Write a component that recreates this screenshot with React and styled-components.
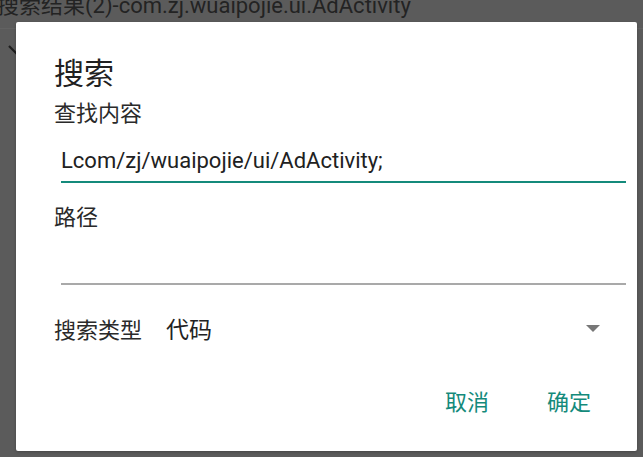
import React from 'react';
import styled, { createGlobalStyle } from 'styled-components';

const GlobalStyle = createGlobalStyle`
  html, body {
    margin: 0;
    padding: 0;
    background: #5b5b5b;
    font-family: Roboto, "Noto Sans CJK SC", sans-serif;
  }
`;

const Screen = styled.div`
  position: relative;
  width: 643px;
  height: 457px;
  overflow: hidden;
  background: #5b5b5b;
`;

const Toolbar = styled.div`
  height: 28px;
  border-bottom: 1px solid #626262;
  overflow: hidden;
`;

const ToolbarTitle = styled.div`
  margin: -8px 0 0 -3px;
  font-size: 22px;
  line-height: 28px;
  color: #232323;
  white-space: nowrap;
`;

const BackIcon = styled.svg`
  display: block;
  margin: 16px 0 0 8px;
`;

const Dialog = styled.div`
  position: absolute;
  left: 16px;
  top: 22px;
  width: 621px;
  height: 429px;
  box-sizing: border-box;
  background: #ffffff;
  border-radius: 2px;
  padding: 32px 11px 0 38px;
  display: flex;
  flex-direction: column;
  box-shadow: 0 1px 3px rgba(0, 0, 0, 0.25);
`;

const Title = styled.h2`
  margin: 0;
  font-size: 30px;
  font-weight: 400;
  line-height: 40px;
  color: #212121;
`;

const Label = styled.div`
  font-size: 22px;
  line-height: 28px;
  color: #2a2a2a;
  margin-top: ${({ $gap }) => $gap || 0}px;
`;

const Field = styled.div`
  margin: ${({ $top }) => $top || 0}px 0 0 7px;
  height: ${({ $height }) => $height}px;
  border-bottom: ${({ $focused }) => ($focused ? '2px solid #148a7b' : '2px solid #a9a9a9')};
  font-size: 22px;
  line-height: 30px;
  color: #212121;
  display: flex;
  align-items: flex-end;
  padding-bottom: 5px;
  box-sizing: border-box;
`;

const TypeRow = styled.div`
  margin-top: 26px;
  display: flex;
  align-items: center;
  height: 34px;
`;

const TypeLabel = styled.span`
  font-size: 22px;
  color: #2a2a2a;
`;

const TypeValue = styled.span`
  margin-left: 24px;
  font-size: 23px;
  color: #222222;
  flex: 1;
`;

const Caret = styled.span`
  width: 0;
  height: 0;
  border-left: 7px solid transparent;
  border-right: 7px solid transparent;
  border-top: 7px solid #777777;
  margin-right: 26px;
`;

const Actions = styled.div`
  margin-top: 44px;
  display: flex;
  justify-content: flex-end;
  gap: 58px;
  padding-right: 35px;
`;

const ActionButton = styled.button`
  border: none;
  background: none;
  padding: 0;
  font-family: inherit;
  font-size: 22px;
  line-height: 28px;
  color: #148a7b;
  cursor: pointer;
`;

export default function App() {
  return (
    <>
      <GlobalStyle />
      <Screen>
        <Toolbar>
          <ToolbarTitle>搜索结果(2)-com.zj.wuaipojie.ui.AdActivity</ToolbarTitle>
        </Toolbar>
        <BackIcon width="12" height="12" viewBox="0 0 12 12">
          <path d="M1 1 L10 10" stroke="#1e1e1e" strokeWidth="2.2" />
        </BackIcon>
        <Dialog>
          <Title>搜索</Title>
          <Label $gap={6}>查找内容</Label>
          <Field $focused $top={6} $height={49}>Lcom/zj/wuaipojie/ui/AdActivity;</Field>
          <Label $gap={21}>路径</Label>
          <Field $top={0} $height={53} />
          <TypeRow>
            <TypeLabel>搜索类型</TypeLabel>
            <TypeValue>代码</TypeValue>
            <Caret />
          </TypeRow>
          <Actions>
            <ActionButton>取消</ActionButton>
            <ActionButton>确定</ActionButton>
          </Actions>
        </Dialog>
      </Screen>
    </>
  );
}
